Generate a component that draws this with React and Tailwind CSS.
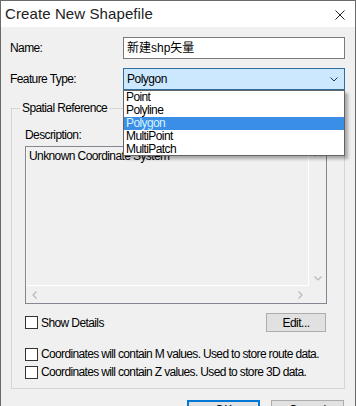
import React from 'react';

const options = ['Point', 'Polyline', 'Polygon', 'MultiPoint', 'MultiPatch'];

const Checkbox = () => (
  <span className="w-[13px] h-[13px] border border-[#333333] bg-white shrink-0" />
);

const App = () => {
  return (
    <div className="relative w-[356px] h-[406px] overflow-hidden border-x border-t border-[#6a6a6a] bg-[#f0f0f0] flex flex-col font-['Liberation_Sans',Arial,sans-serif] text-[12px] leading-[14px] text-black">
      {/* title bar */}
      <div className="h-[26px] bg-white flex items-center justify-between pl-[4px] pr-[10px] shrink-0">
        <span className="text-[15px] text-[#222222] tracking-[0.1px]">Create New Shapefile</span>
        <svg width="10" height="10" viewBox="0 0 10 10" className="mt-[1px]">
          <path d="M0.5 0.5 L9.5 9.5 M9.5 0.5 L0.5 9.5" stroke="#222" strokeWidth="1" fill="none" />
        </svg>
      </div>

      {/* name */}
      <div className="flex items-center mt-[10px]">
        <span className="w-[122px] pl-[9px] tracking-[-0.6px]">Name:</span>
        <div className="w-[222px] h-[22px] border border-[#7a7a7a] bg-white flex items-center pl-[3px] text-[12px] font-['Liberation_Sans','Noto_Sans_CJK_SC',sans-serif]">
          新建shp矢量
        </div>
      </div>

      {/* feature type */}
      <div className="flex items-center mt-[9px]">
        <span className="w-[122px] pl-[9px] tracking-[-0.6px]">Feature Type:</span>
        <div className="w-[222px] h-[22px] border border-[#2f6f9f] bg-[#cce8ff] flex items-center justify-between pl-[3px] pr-[6px]">
          <span className="tracking-[-0.5px]">Polygon</span>
          <svg width="8" height="5" viewBox="0 0 8 5">
            <path d="M0.5 0.5 L4 4 L7.5 0.5" stroke="#333" strokeWidth="1" fill="none" />
          </svg>
        </div>
      </div>

      {/* group box */}
      <fieldset className="ml-[10px] mt-[11px] w-[334px] h-[288px] border border-[#d5d5d5] shrink-0">
        <legend className="ml-[8px] px-[2px] tracking-[-0.6px]">Spatial Reference</legend>
        <div className="pl-[13px] pt-[13px] w-[316px]">
          <div className="tracking-[-0.6px]">Description:</div>
          <div className="mt-[4px] w-[302px] h-[158px] border border-[#828790] grid grid-cols-[1fr_17px] grid-rows-[1fr_17px]">
            <div className="border-r border-b border-white border-l border-l-[#f8f8f8] px-[2px] pt-[2px] tracking-[-0.6px]">
              Unknown Coordinate System
            </div>
            <div className="flex flex-col items-center justify-between py-[5px]">
              <svg width="8" height="5" viewBox="0 0 8 5">
                <path d="M0.5 4.5 L4 1 L7.5 4.5" stroke="#b8b8b8" strokeWidth="1.2" fill="none" />
              </svg>
              <svg width="8" height="5" viewBox="0 0 8 5">
                <path d="M0.5 0.5 L4 4 L7.5 0.5" stroke="#b8b8b8" strokeWidth="1.2" fill="none" />
              </svg>
            </div>
            <div className="flex items-center justify-between px-[6px]">
              <svg width="5" height="8" viewBox="0 0 5 8">
                <path d="M4.5 0.5 L1 4 L4.5 7.5" stroke="#b8b8b8" strokeWidth="1.2" fill="none" />
              </svg>
              <svg width="5" height="8" viewBox="0 0 5 8">
                <path d="M0.5 0.5 L4 4 L0.5 7.5" stroke="#b8b8b8" strokeWidth="1.2" fill="none" />
              </svg>
            </div>
            <div />
          </div>

          <div className="mt-[9px] flex items-center justify-between w-[302px]">
            <div className="flex items-center gap-[3px]">
              <Checkbox />
              <span className="tracking-[-0.6px]">Show Details</span>
            </div>
            <button className="mr-[1px] w-[60px] h-[19px] bg-[#e1e1e1] border border-[#adadad] flex items-center justify-center tracking-[-0.5px]">
              Edit...
            </button>
          </div>

          <div className="mt-[13px] flex flex-col">
            <div className="h-[18px] flex items-center gap-[3px] whitespace-nowrap">
              <Checkbox />
              <span className="tracking-[-0.65px]">Coordinates will contain M values. Used to store route data.</span>
            </div>
            <div className="h-[18px] flex items-center gap-[3px] whitespace-nowrap">
              <Checkbox />
              <span className="tracking-[-0.65px]">Coordinates will contain Z values. Used to store 3D data.</span>
            </div>
          </div>
        </div>
      </fieldset>

      {/* bottom buttons */}
      <div className="flex justify-end gap-[11px] pr-[11px] mt-[11px]">
        <button className="w-[73px] h-[23px] bg-[#e1e1e1] border-2 border-[#0078d7] flex items-start justify-center pt-[1px]">OK</button>
        <button className="w-[73px] h-[23px] bg-[#e1e1e1] border border-[#adadad] flex items-start justify-center pt-[2px]">Cancel</button>
      </div>

      {/* open dropdown list */}
      <div className="absolute left-[122px] top-[89px] w-[222px] h-[66px] border border-[#646464] bg-white shadow-[3px_3px_3px_rgba(0,0,0,0.3)] flex flex-col">
        {options.map((opt) => (
          <div
            key={opt}
            className={`h-[13px] leading-[13px] pl-[2px] tracking-[-0.6px] ${
              opt === 'Polygon' ? 'bg-[#3a8ee6] text-[#d6f2ff]' : ''
            }`}
          >
            {opt}
          </div>
        ))}
      </div>
    </div>
  );
};

export default App;
